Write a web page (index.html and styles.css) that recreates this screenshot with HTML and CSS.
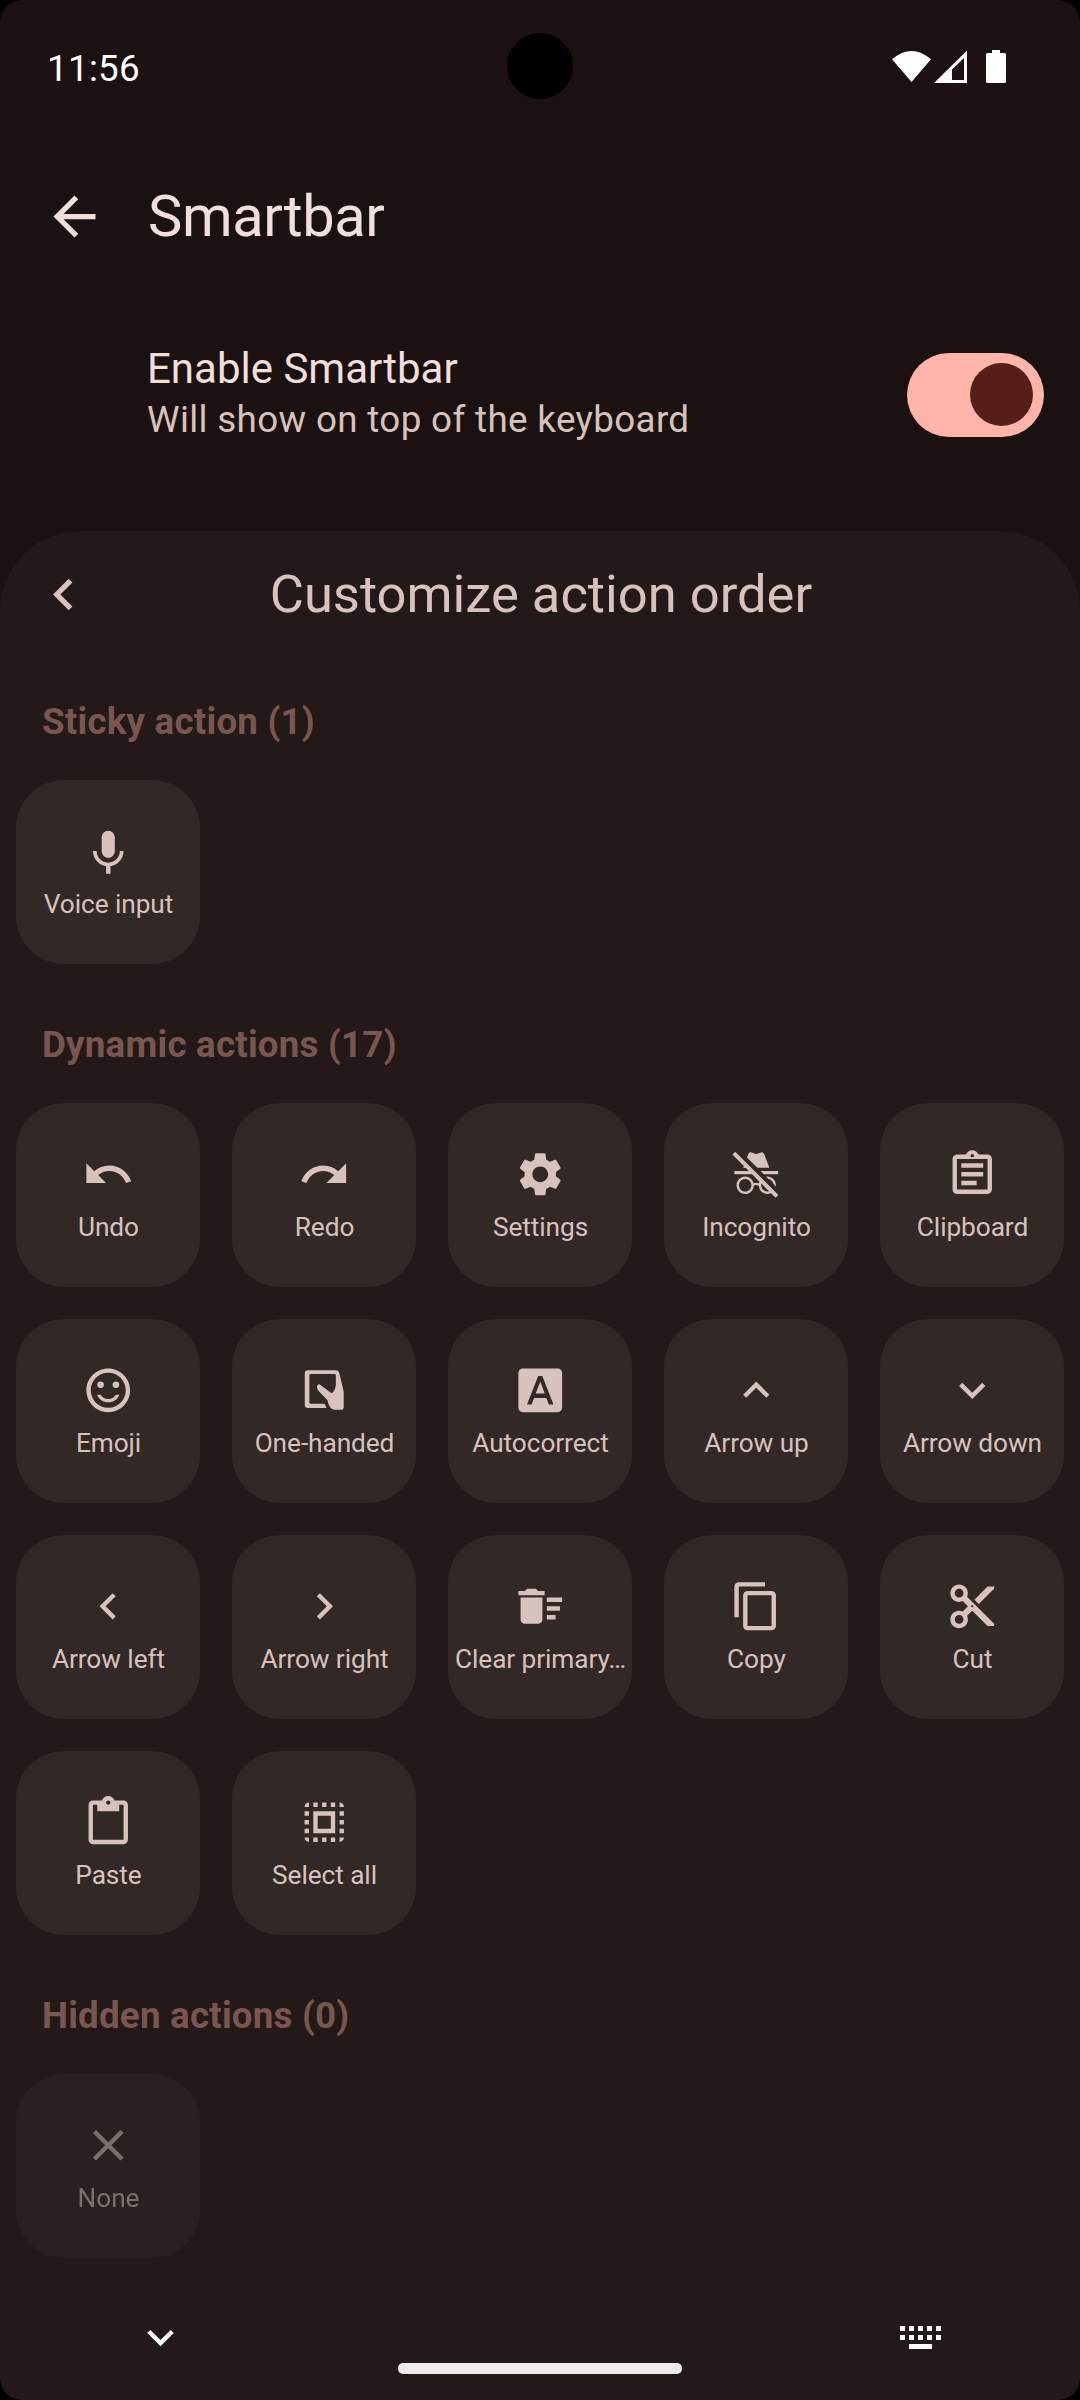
FILE: index.html
```html
<!DOCTYPE html>
<html lang="en">
<head>
<meta charset="utf-8">
<title>Smartbar</title>
<link rel="stylesheet" href="styles.css">
</head>
<body>
<div class="screen">
  <div class="status">
    <span class="time">11:56</span>
    <svg class="status-icons" width="116" height="36" viewBox="0 0 116 36">
      <path d="M2 11Q21.500-7 41 11L21.500 35Z" transform="translate(0 1) scale(1 .94)"/>
      <path fill-rule="evenodd" d="M44 35L77 2.500V35ZM62 21.500V32H74V10Z"/>
      <path d="M96 6.500Q96 5 97.500 5H102V2H110V5H114.500Q116 5 116 6.500V33.500Q116 35 114.500 35H97.500Q96 35 96 33.500Z"/>
    </svg>
    <div class="camera"></div>
  </div>

  <header class="appbar">
    <svg class="icon-lg" viewBox="0 0 24 24"><path d="M20 11H7.830l5.590-5.590L12 4l-8 8 8 8 1.410-1.410L7.830 13H20v-2z"/></svg>
    <h1>Smartbar</h1>
  </header>

  <div class="pref">
    <div class="pref-text">
      <div class="pref-title">Enable Smartbar</div>
      <div class="pref-sub">Will show on top of the keyboard</div>
    </div>
    <div class="switch"><div class="thumb"></div></div>
  </div>

  <main class="sheet">
    <div class="sheet-head">
      <svg class="icon-lg" viewBox="0 0 24 24"><path d="M15.410 7.410L14 6l-6 6 6 6 1.410-1.410L10.830 12z"/></svg>
      <h2>Customize action order</h2>
    </div>

    <h3>Sticky action (1)</h3>
    <div class="grid">
      <div class="tile"><svg class="icon" viewBox="0 0 24 24"><path transform="translate(0 .55) scale(1 1.035)" d="M12 14c1.660 0 2.990-1.340 2.990-3L15 5c0-1.660-1.340-3-3-3S9 3.340 9 5v6c0 1.660 1.340 3 3 3zm5.300-3c0 3-2.540 5.100-5.300 5.100S6.700 14 6.700 11H5c0 3.410 2.720 6.230 6 6.720V21h2v-3.280c3.280-.48 6-3.300 6-6.720h-1.700z"/></svg><span>Voice input</span></div>
    </div>

    <h3>Dynamic actions (17)</h3>
    <div class="grid">
      <div class="tile"><svg class="icon" viewBox="0 0 24 24"><path d="M12.500 8c-2.650 0-5.050.99-6.900 2.600L2 7v9h9l-3.620-3.620c1.390-1.160 3.160-1.880 5.120-1.880 3.540 0 6.550 2.310 7.600 5.500l2.370-.78C21.080 11.030 17.150 8 12.500 8z"/></svg><span>Undo</span></div>
      <div class="tile"><svg class="icon" viewBox="0 0 24 24"><path d="M18.400 10.600C16.550 8.990 14.150 8 11.500 8c-4.650 0-8.580 3.030-9.960 7.220L3.900 16c1.050-3.190 4.050-5.500 7.600-5.500 1.950 0 3.730.72 5.120 1.880L13 16h9V7l-3.600 3.600z"/></svg><span>Redo</span></div>
      <div class="tile"><svg class="icon" viewBox="0 0 24 24"><path d="M19.140 12.940c.04-.3.060-.61.060-.94 0-.32-.02-.64-.07-.94l2.030-1.580c.18-.14.230-.41.120-.61l-1.920-3.320c-.12-.22-.37-.29-.59-.22l-2.390.96c-.5-.38-1.030-.7-1.620-.94l-.36-2.540c-.04-.24-.24-.41-.48-.41h-3.840c-.24 0-.43.170-.47.410l-.36 2.540c-.59.240-1.130.570-1.620.94l-2.390-.96c-.22-.08-.47 0-.59.220L2.740 8.870c-.12.210-.08.470.12.610l2.030 1.580c-.05.3-.09.630-.09.940s.02.640.070.940l-2.030 1.580c-.18.140-.23.410-.12.610l1.920 3.320c.12.220.37.290.59.220l2.390-.96c.5.380 1.030.7 1.620.94l.36 2.540c.05.240.24.410.48.410h3.840c.24 0 .44-.17.470-.41l.36-2.540c.59-.24 1.130-.56 1.620-.94l2.390.96c.22.080.47 0 .59-.22l1.920-3.320c.12-.22.070-.47-.12-.61l-2.010-1.580zM12 15.600c-1.980 0-3.600-1.620-3.600-3.600s1.620-3.600 3.600-3.600 3.600 1.620 3.600 3.600-1.620 3.600-3.600 3.600z"/></svg><span>Settings</span></div>
      <div class="tile"><svg class="icon" viewBox="0 0 24 24"><mask id="cut"><rect width="24" height="24" fill="#fff"/><path fill="#000" d="M1 1.600L23 23.600V19.600L1-2.400Z"/></mask><path mask="url(#cut)" d="M17.060 13C15.200 13 13.640 14.330 13.240 16.100C12.290 15.690 11.420 15.800 10.760 16.090C10.350 14.310 8.790 13 6.940 13C4.770 13 3 14.790 3 17C3 19.210 4.770 21 6.940 21C9 21 10.680 19.380 10.840 17.320C11.180 17.080 12.070 16.630 13.160 17.340C13.340 19.390 15 21 17.060 21C19.230 21 21 19.210 21 17C21 14.790 19.230 13 17.060 13M6.940 19.860C5.380 19.860 4.130 18.580 4.130 17S5.390 14.140 6.940 14.140C8.500 14.140 9.750 15.420 9.750 17S8.500 19.860 6.940 19.860M17.060 19.860C15.500 19.860 14.250 18.580 14.250 17S15.500 14.140 17.060 14.140C18.620 14.140 19.880 15.420 19.880 17S18.610 19.860 17.060 19.860M22 10.500H2V12H22V10.500M15.530 2.630C15.310 2.140 14.750 1.880 14.220 2.050L12 2.790L9.770 2.050L9.720 2.040C9.190 1.890 8.630 2.170 8.430 2.680L6 9H18L15.560 2.680Z"/><path d="M22.110 21.460L2.390 1.730L1.110 3L20.840 22.730Z"/></svg><span>Incognito</span></div>
      <div class="tile"><svg class="icon" viewBox="0 0 24 24"><path d="M7 15h7v2H7zm0-4h10v2H7zm0-4h10v2H7zm12-4h-4.180C14.400 1.840 13.300 1 12 1c-1.300 0-2.400.84-2.820 2H5c-.14 0-.27.010-.4.040-.39.080-.74.280-1.010.55-.18.180-.33.4-.43.640-.1.230-.16.490-.16.770v14c0 .27.060.54.160.78s.25.450.43.640c.27.270.62.470 1.010.55.130.020.26.030.4.030h14c1.100 0 2-.9 2-2V5c0-1.100-.9-2-2-2zm-7-.25c.41 0 .75.340.75.750s-.34.750-.75.750-.75-.34-.75-.75.340-.75.750-.75zM19 19H5V5h14v14z"/></svg><span>Clipboard</span></div>

      <div class="tile"><svg class="icon" viewBox="0 0 24 24"><circle cx="15.500" cy="9.500" r="1.500"/><circle cx="8.500" cy="9.500" r="1.500"/><path d="M11.990 2C6.470 2 2 6.480 2 12s4.470 10 9.990 10C17.520 22 22 17.520 22 12S17.520 2 11.990 2zM12 20c-4.420 0-8-3.580-8-8s3.580-8 8-8 8 3.580 8 8-3.580 8-8 8zm0-4c-1.480 0-2.750-.81-3.450-2H6.880c.8 2.050 2.790 3.500 5.120 3.500s4.320-1.450 5.120-3.500h-1.670c-.7 1.190-1.970 2-3.450 2z"/></svg><span>Emoji</span></div>
      <div class="tile"><svg class="icon" viewBox="0 0 24 24"><path d="M4.600 2.800H17.200Q18.600 2.800 18.900 4.200L20.700 11.800Q20.900 12.600 20.900 13.400V19.600Q20.900 20.900 19.600 20.900H16.600Q15.400 20.900 14.700 19.800Q13.700 18.300 13.500 16.600L9.300 12.200Q8.600 11.400 8.700 10.300Q8.900 9.100 9.800 9.300L14.700 12.900Q15.500 13.500 16 12.900Q17.100 11.600 17.300 9.800V5.200Q17.300 4.600 16.700 4.600H5.800Q5.200 4.600 5.200 5.200V17.600Q5.200 18.200 5.800 18.200H11.600Q12.300 18.200 12.500 18.800L13 20.100H4.600Q3.100 20.100 3.100 18.600V4.300Q3.100 2.800 4.600 2.800Z"/></svg><span>One-handed</span></div>
      <div class="tile"><svg class="icon" viewBox="0 0 24 24"><path d="M9.930 13.500h4.140L12 7.980zM20 2H4c-1.100 0-2 .9-2 2v16c0 1.100.9 2 2 2h16c1.100 0 2-.9 2-2V4c0-1.100-.9-2-2-2zm-4.050 16.500l-1.140-3H9.170l-1.120 3H5.960l5.110-13h1.860l5.110 13h-2.090z"/></svg><span>Autocorrect</span></div>
      <div class="tile"><svg class="icon" viewBox="0 0 24 24"><path d="M7.410 15.410L12 10.830l4.590 4.580L18 14l-6-6-6 6z"/></svg><span>Arrow up</span></div>
      <div class="tile"><svg class="icon" viewBox="0 0 24 24"><path d="M7.410 8.590L12 13.170l4.590-4.580L18 10l-6 6-6-6z"/></svg><span>Arrow down</span></div>

      <div class="tile"><svg class="icon" viewBox="0 0 24 24"><path d="M15.410 7.410L14 6l-6 6 6 6 1.410-1.410L10.830 12z"/></svg><span>Arrow left</span></div>
      <div class="tile"><svg class="icon" viewBox="0 0 24 24"><path d="M8.590 16.590L13.170 12 8.590 7.410 10 6l6 6-6 6z"/></svg><span>Arrow right</span></div>
      <div class="tile"><svg class="icon" viewBox="0 0 24 24"><path d="M15 16h4v2h-4zm0-8h7v2h-7zm0 4h6v2h-6zM3 18c0 1.100.9 2 2 2h6c1.100 0 2-.9 2-2V8H3v10zM14 5h-3l-1-1H6L5 5H2v2h12z"/></svg><span>Clear primary…</span></div>
      <div class="tile"><svg class="icon" viewBox="0 0 24 24"><path d="M16 1H4c-1.100 0-2 .9-2 2v14h2V3h12V1zm3 4H8c-1.100 0-2 .9-2 2v14c0 1.100.9 2 2 2h11c1.100 0 2-.9 2-2V7c0-1.100-.9-2-2-2zm0 16H8V7h11v14z"/></svg><span>Copy</span></div>
      <div class="tile"><svg class="icon" viewBox="0 0 24 24"><path d="M9.640 7.640c.23-.5.360-1.050.36-1.640 0-2.210-1.790-4-4-4S2 3.790 2 6s1.790 4 4 4c.59 0 1.140-.13 1.640-.36L10 12l-2.360 2.360C7.140 14.130 6.590 14 6 14c-2.210 0-4 1.790-4 4s1.790 4 4 4 4-1.790 4-4c0-.59-.13-1.140-.36-1.640L12 14l7 7h3v-1L9.640 7.640zM6 8c-1.100 0-2-.89-2-2s.9-2 2-2 2 .89 2 2-.9 2-2 2zm0 12c-1.100 0-2-.89-2-2s.9-2 2-2 2 .89 2 2-.9 2-2 2zm6-7.500c-.28 0-.5-.22-.5-.5s.22-.5.5-.5.5.220.5.500-.22.500-.5.500zM19 3l-6 6 2 2 7-7V3z"/></svg><span>Cut</span></div>

      <div class="tile"><svg class="icon" viewBox="0 0 24 24"><path d="M19 2h-4.180C14.400.84 13.300 0 12 0c-1.300 0-2.400.84-2.820 2H5c-1.100 0-2 .9-2 2v16c0 1.100.9 2 2 2h14c1.100 0 2-.9 2-2V4c0-1.100-.9-2-2-2zm-7 0c.55 0 1 .45 1 1s-.45 1-1 1-1-.45-1-1 .45-1 1-1zm7 18H5V4h2v3h10V4h2v16z"/></svg><span>Paste</span></div>
      <div class="tile"><svg class="icon" viewBox="0 0 24 24"><path d="M3 5h2V3c-1.100 0-2 .9-2 2zm0 8h2v-2H3v2zm4 8h2v-2H7v2zM3 9h2V7H3v2zm10-6h-2v2h2V3zm6 0v2h2c0-1.100-.9-2-2-2zM5 21v-2H3c0 1.100.9 2 2 2zm-2-4h2v-2H3v2zM9 3H7v2h2V3zm2 18h2v-2h-2v2zm8-8h2v-2h-2v2zm0 8c1.100 0 2-.9 2-2h-2v2zm0-12h2V7h-2v2zm0 8h2v-2h-2v2zm-4 4h2v-2h-2v2zm0-16h2V3h-2v2zM7 17h10V7H7v10zm2-8h6v6H9V9z"/></svg><span>Select all</span></div>
    </div>

    <h3>Hidden actions (0)</h3>
    <div class="grid">
      <div class="tile disabled"><svg class="icon" viewBox="0 0 24 24"><path d="M19 6.410L17.590 5 12 10.590 6.410 5 5 6.410 10.590 12 5 17.590 6.410 19 12 13.410 17.590 19 19 17.590 13.410 12z"/></svg><span>None</span></div>
    </div>

    <nav class="navbar">
      <svg class="nav-down" viewBox="0 0 24 24"><path d="M7.410 8.590L12 13.170l4.590-4.580L18 10l-6 6-6-6z"/></svg>
      <div class="handle"></div>
      <svg class="nav-kbd" width="41" height="23" viewBox="0 0 41 23"><path d="M0 0h5v5H0zM9 0h5v5H9zM18 0h5v5h-5zM27 0h5v5h-5zM36 0h5v5h-5zM0 9h5v5H0zM9 9h5v5H9zM18 9h5v5h-5zM27 9h5v5h-5zM36 9h5v5h-5zM9 18h23v5H9z"/></svg>
    </nav>
  </main>
</div>
</body>
</html>
```
FILE: styles.css
```css
* { box-sizing: border-box; }
body { margin: 0; background: #000; font-family: Roboto, sans-serif; }
svg { display: block; flex: none; fill: currentColor; }
h1, h2, h3 { margin: 0; font-weight: 400; }

.screen {
  width: 1080px;
  height: 2400px;
  border-radius: 22px;
  overflow: hidden;
  background: #1b1110;
  color: #d8c2be;
  display: flex;
  flex-direction: column;
}

.status {
  position: relative;
  height: 137px;
  padding: 0 74px 0 47px;
  display: flex;
  justify-content: space-between;
  align-items: center;
  color: #fff;
}
.time { font-size: 36.75px; letter-spacing: .3px; }
.status-icons { margin-bottom: 6px; }
.camera {
  position: absolute;
  left: 507px;
  top: 33px;
  width: 66px;
  height: 66px;
  border-radius: 50%;
  background: #000;
}

.appbar {
  height: 159px;
  padding: 0 43px;
  display: flex;
  align-items: center;
  gap: 42px;
  color: #f1dfdc;
}
.icon-lg { width: 63px; height: 63px; }
h1 { font-size: 57.75px; letter-spacing: -.4px; margin-bottom: 2px; }

.pref {
  height: 235px;
  padding: 0 36px 38px 147px;
  display: flex;
  align-items: center;
  justify-content: space-between;
}
.pref-text { line-height: 50.7px; }
.pref-title { font-size: 42px; color: #f1dfdc; }
.pref-sub { font-size: 36.75px; letter-spacing: .35px; }
.switch {
  width: 137px;
  height: 84px;
  padding: 10.5px 11.5px;
  border-radius: 42px;
  background: #ffb4a9;
  display: flex;
  justify-content: flex-end;
}
.thumb { width: 63px; height: 63px; border-radius: 50%; background: #561e18; }

.sheet {
  flex: 1;
  border-radius: 80px 80px 0 0;
  background: #231918;
}
.sheet-head {
  height: 126px;
  padding: 0 93px 0 32px;
  display: flex;
  align-items: center;
}
h2 { flex: 1; text-align: center; font-size: 52.5px; }
h3 {
  height: 107px;
  padding: 11px 42px 0;
  font-size: 36.75px;
  line-height: 107px;
  font-weight: 700;
  letter-spacing: .2px;
  color: #7a5650;
}

.grid {
  display: grid;
  grid-template-columns: repeat(5, 184px);
  gap: 32px;
  padding: 16px;
}
.tile {
  height: 184px;
  padding: 45px 0 0 1px;
  border-radius: 48px;
  background: #322826;
  display: flex;
  flex-direction: column;
  align-items: center;
  gap: 8px;
  font-size: 26.25px;
  line-height: 37px;
  letter-spacing: -.08px;
  white-space: nowrap;
}
.icon { width: 52.5px; height: 52.5px; }
.disabled { opacity: .5; }

.navbar {
  height: 126px;
  padding: 0 139px 0 134px;
  display: grid;
  grid-template-columns: 264px 284px 1fr;
  color: #fff;
}
.nav-down { width: 53px; height: 53px; margin-top: 37px; }
.handle { height: 11px; margin-top: 89px; border-radius: 5px; background: #ececec; }
.nav-kbd { justify-self: end; margin-top: 52px; }
```
